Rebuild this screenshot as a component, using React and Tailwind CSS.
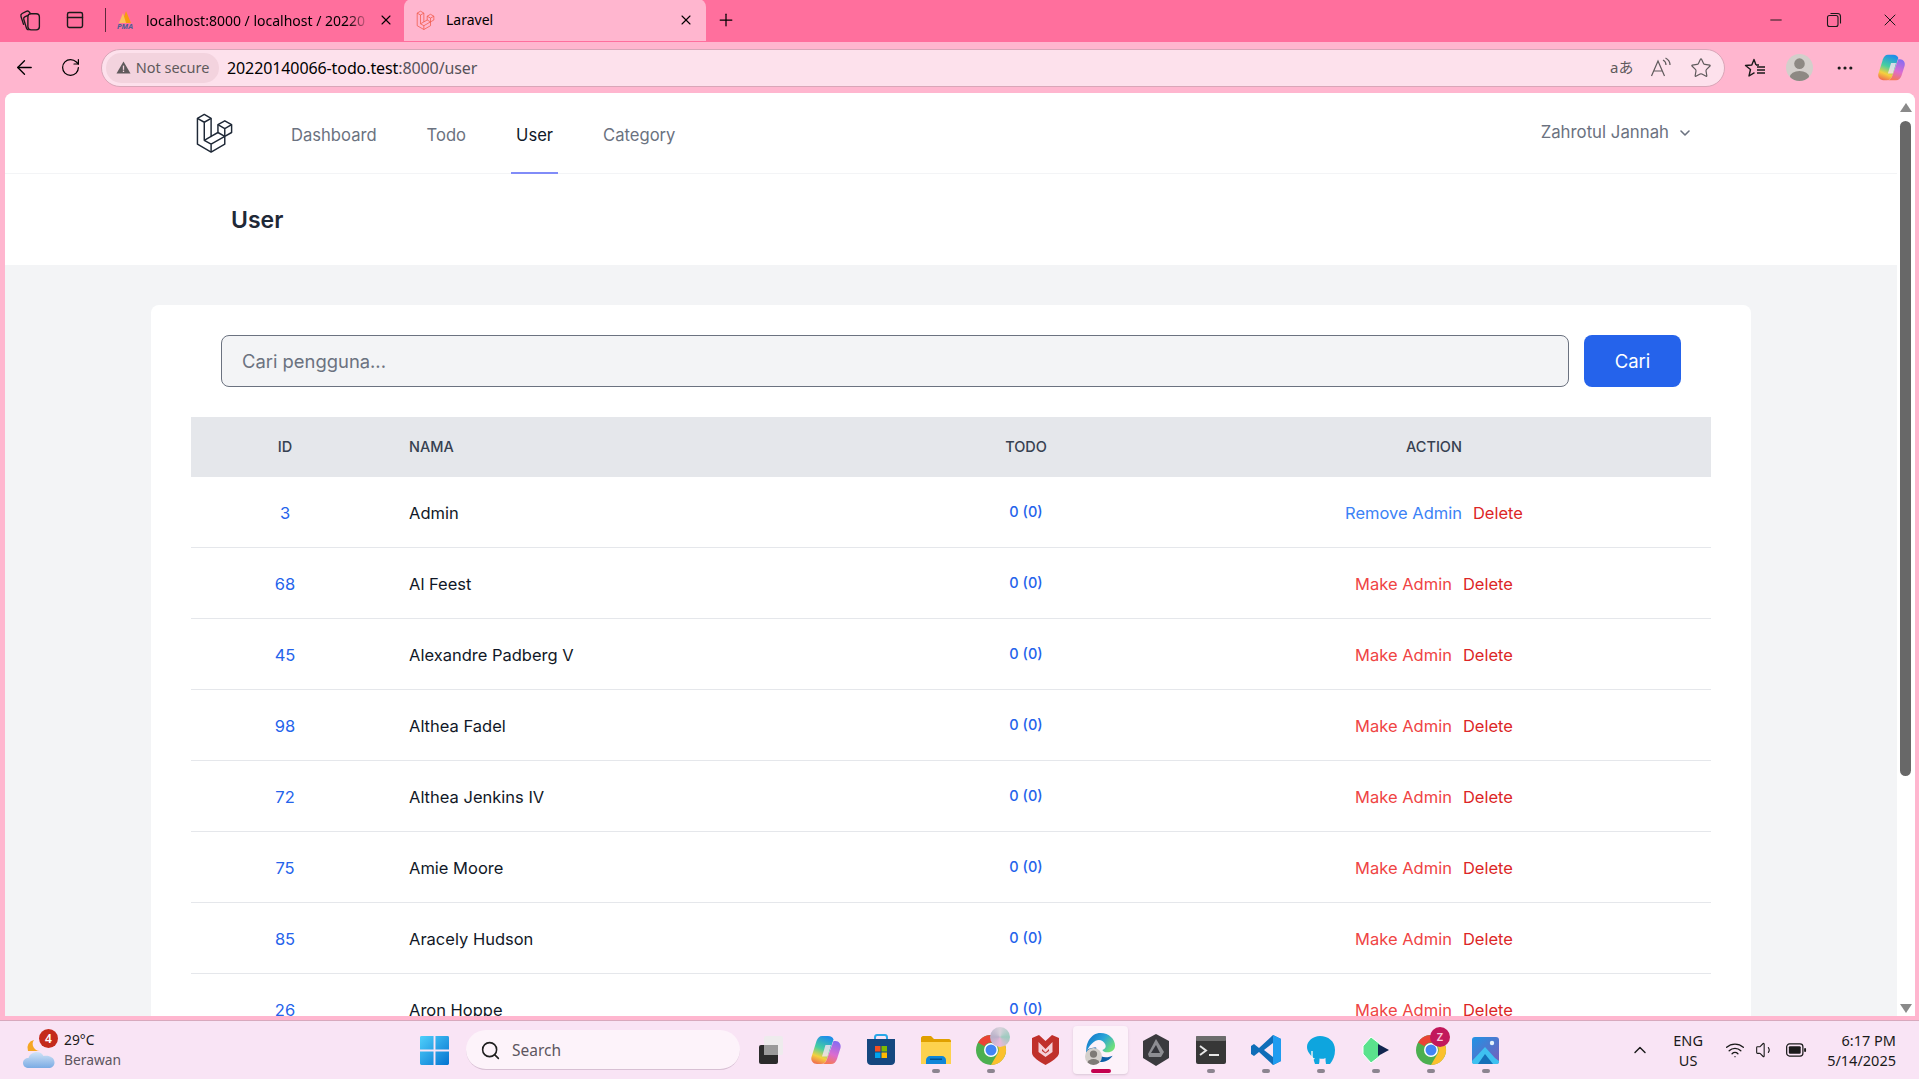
import { ChevronDown, ChevronUp, Minus, Plus, RotateCw, ArrowLeft, X, Search, Star, Wifi, Volume1, MoreHorizontal, PanelTop } from 'lucide-react';

const users = [
  { id: 3, name: 'Admin', admin: true },
  { id: 68, name: 'Al Feest' },
  { id: 45, name: 'Alexandre Padberg V' },
  { id: 98, name: 'Althea Fadel' },
  { id: 72, name: 'Althea Jenkins IV' },
  { id: 75, name: 'Amie Moore' },
  { id: 85, name: 'Aracely Hudson' },
  { id: 26, name: 'Aron Hoppe' },
];

const LaravelLogo = ({ className, color = '#1f2937' }) => (
  <svg viewBox="0 0 40 42" fill="none" stroke={color} strokeWidth="1.5" strokeLinejoin="round" className={className}>
    <path d="M1.5 6.5 8.5 2.5 15.5 6.5 V25 L22.5 21 V13 L29.5 9 36.5 13 V21 L29.5 25 V33 L15.5 41 1.5 33 Z" />
    <path d="M1.5 6.5 8.5 10.5 15.5 6.5 M8.5 10.5 V29 L15.5 33 V41 M8.5 29 15.5 25 M15.5 33 29.5 25 M22.5 13 29.5 17 36.5 13 M29.5 17 V25 M22.5 21 29.5 25" />
  </svg>
);

const CopilotIcon = ({ size = 32, id }) => (
  <svg viewBox="0 0 32 32" width={size} height={size}>
    <defs>
      <linearGradient id={`${id}a`} x1="0.6" y1="0" x2="0.3" y2="1">
        <stop offset="0" stopColor="#1f8fe8" />
        <stop offset="0.45" stopColor="#47cfa0" />
        <stop offset="0.75" stopColor="#f5d13e" />
        <stop offset="1" stopColor="#f0734e" />
      </linearGradient>
      <linearGradient id={`${id}b`} x1="0.6" y1="0" x2="0.3" y2="1">
        <stop offset="0" stopColor="#8a6cf0" />
        <stop offset="0.55" stopColor="#dc6cd0" />
        <stop offset="1" stopColor="#f7794f" />
      </linearGradient>
    </defs>
    <path d="M12 2h6c3 0 5 1.500 5.500 3.500L17 25c-1 3-3 5-6 5H7c-4 0-6.500-3.500-5.500-7l5-16C7.500 4 9.500 2 12 2z" fill={`url(#${id}a)`} />
    <path d="M12 30h9c3 0 5-2 6-5l3.500-11c1-3.500-1.500-7-5-7h-2L17 25c-1 3-3 5-5 5z" fill={`url(#${id}b)`} />
    <path d="M15.500 11h5.500l-3.500 11.500h-5.500z" fill="#fbe3f1" opacity="0.8" />
  </svg>
);

const ChromeIcon = () => (
  <svg viewBox="0 0 32 32" width="32" height="32">
    <circle cx="16" cy="16" r="15" fill="#4caf50" />
    <path d="M16 1a15 15 0 0 1 13 7.500H16a7.500 7.500 0 0 0-6.500 3.750L3 8.500A15 15 0 0 1 16 1z" fill="#ea4335" />
    <path d="M29 8.500A15 15 0 0 1 16 31l6.500-11.250A7.500 7.500 0 0 0 22.500 12z" fill="#fbc02d" />
    <circle cx="16" cy="16" r="7" fill="#fff" />
    <circle cx="16" cy="16" r="5.500" fill="#4285f4" />
  </svg>
);

const TaskIcon = ({ children, running, active }) => (
  <div className={`relative flex h-[48px] w-[55px] items-center justify-center rounded ${active ? 'bg-[#fdf2fa] shadow-sm' : ''}`}>
    {children}
    {running && <span className="absolute bottom-[1px] left-1/2 h-[4px] w-[8px] -translate-x-1/2 rounded-full bg-[#8c8490]" />}
    {active && <span className="absolute bottom-[1px] left-1/2 h-[4px] w-[20px] -translate-x-1/2 rounded-full bg-[#c4004f]" />}
  </div>
);

const App = () => {
  return (
    <div className="flex h-[1079px] w-[1919px] flex-col overflow-hidden bg-[#ffb6cf] font-['Noto_Sans',sans-serif] text-black">
      {/* tab strip */}
      <div className="flex h-[42px] shrink-0 items-center bg-[#ff6f9d] pb-[2px] pl-[19px]">
        <svg viewBox="0 0 22 22" width="23" height="23" fill="none" stroke="#1a1a1a" strokeWidth="1.3" className="mr-[23px]">
          <rect x="8.500" y="4.500" width="11" height="15.500" rx="3" />
          <path d="M8.500 6 5.500 7.500C4.500 8 4.300 9 4.600 10l2.600 8.500c.3 1 1 1.500 2 1.500" />
          <path d="M11 4.500 9.500 2.500C8.800 1.800 8 1.700 7 2.200L3 4.300C1.800 5 1.500 6 1.900 7.200l2.600 8" />
        </svg>
        <PanelTop size={20} strokeWidth={1.7} className="mr-[20px] text-[#1a1a1a]" />
        <div className="mr-[10px] h-[24px] w-px bg-[#5c2a3c]" />
        <div className="flex h-[42px] w-[288px] items-center gap-[8px]">
          <svg viewBox="0 0 22 20" width="22" height="20" className="shrink-0">
            <path d="M10 1 15 13H6z" fill="#f89c0e" />
            <path d="M7 3 10 13H3z" fill="#fbc15e" />
            <text x="1" y="19" fontSize="7.500" fontWeight="700" fontStyle="italic" fill="#4b5f94">PMA</text>
          </svg>
          <span className="w-[224px] overflow-hidden whitespace-nowrap text-[14px] [mask-image:linear-gradient(to_right,black_90%,transparent)]">localhost:8000 / localhost / 20220</span>
          <X size={16} strokeWidth={1.6} className="shrink-0" />
        </div>
        <div className="flex h-[42px] w-[302px] items-center rounded-t-lg bg-[#ffb6cf] pb-[1px] pl-[12px] pr-[12px]">
          <LaravelLogo color="#f0533f" className="h-[20px] w-[20px] shrink-0" />
          <span className="ml-[10px] flex-1 text-[14px]">Laravel</span>
          <X size={16} strokeWidth={1.6} />
        </div>
        <Plus size={20} strokeWidth={1.5} className="ml-[10px]" />
        <div className="ml-auto flex items-center text-[#1a1a1a]">
          <div className="flex w-[58px] justify-center"><Minus size={18} strokeWidth={1.3} /></div>
          <div className="flex w-[58px] justify-center">
            <svg viewBox="0 0 16 16" width="16" height="16" fill="none" stroke="#1a1a1a" strokeWidth="1.100">
              <rect x="1.500" y="3.500" width="10.500" height="11" rx="2" />
              <path d="M4.500 1.500h7c2 0 3 1 3 3v7" />
            </svg>
          </div>
          <div className="flex w-[56px] justify-center pr-[2px]"><X size={20} strokeWidth={1.2} /></div>
        </div>
      </div>

      {/* toolbar */}
      <div className="flex h-[51px] shrink-0 items-center pl-[13px] pr-[10px]">
        <ArrowLeft size={23} strokeWidth={1.4} />
        <RotateCw size={21} strokeWidth={1.4} className="ml-[24px]" />
        <div className="ml-[20px] flex h-[38px] w-[1624px] items-center rounded-full border border-[#d9a6b8] bg-[#fde1ec] pl-[4px] pr-[12px]">
          <div className="flex h-[30px] w-[113px] items-center justify-center gap-[5px] rounded-full bg-[#f3d3de] text-[14.500px] text-[#5f5a5c]">
            <svg viewBox="0 0 16 16" width="15" height="15"><path d="M8 1.500 15.500 14.500H.5Z" fill="#5f5a5c" /><rect x="7.300" y="6" width="1.400" height="4.500" fill="#f3d3de" /><rect x="7.300" y="11.300" width="1.400" height="1.500" fill="#f3d3de" /></svg>
            Not secure
          </div>
          <div className="ml-[8px] text-[16px] tracking-[-0.1px]">20220140066-todo.test<span className="text-[#56525a]">:8000/user</span></div>
          <div className="ml-auto flex items-center gap-[18px] text-[#5f5a5c]">
            <span className="w-[22px] whitespace-nowrap font-['Noto_Sans','Noto_Sans_CJK_JP',sans-serif] text-[15px]">aあ</span>
            <svg viewBox="0 0 22 22" width="22" height="22" fill="none" stroke="#5f5a5c" strokeWidth="1.200"><path d="M1.500 19 8 4l6.500 15M4 14h8" /><path d="M13 3c2 1 3 3 3 5M15.500 1c3 1.500 4.500 4 4.500 7" /></svg>
            <Star size={22} strokeWidth={1.3} />
          </div>
        </div>
        <div className="ml-[19px] flex items-center">
          <svg viewBox="0 0 22 22" width="22" height="22" fill="none" stroke="#1a1a1a" strokeWidth="1.400" strokeLinejoin="round"><path d="M12 8 10 2.500 7.800 8 1.500 8.500l5 4-1.500 6.500 5.500-3.300" /><path d="M12 8h3M13 13h8M13 10h8M13 16h8" /></svg>
          <div className="ml-[20px] flex h-[27px] w-[27px] items-end justify-center overflow-hidden rounded-full bg-[#d3cfcb]">
            <svg viewBox="0 0 28 28" width="27" height="27" fill="#8d8983"><circle cx="14" cy="10" r="5.500" /><ellipse cx="14" cy="24" rx="10" ry="6.500" /></svg>
          </div>
          <MoreHorizontal size={20} strokeWidth={1.8} className="ml-[22px] text-[#1a1a1a]" />
          <div className="ml-[22px]"><CopilotIcon id="cpa" size={29} /></div>
        </div>
      </div>

      {/* web page viewport */}
      <div className="ml-[5px] mr-[4px] flex h-[923px] shrink-0 overflow-hidden rounded-t-lg bg-[#f3f4f6]">
        <div className="min-w-0 flex-1 font-['Inter',sans-serif]">
          <nav className="h-[81px] border-b border-[#f3f4f6] bg-white">
            <div className="mx-auto flex h-full w-[1600px] items-stretch px-[40px]">
              <div className="flex items-center pl-[3px]">
                <LaravelLogo className="h-[43px] w-[43px] pb-[2px]" />
              </div>
              <div className="ml-[54px] flex gap-[50px] text-[16.600px] text-[#6b7280]">
                <a className="flex items-center pt-[5px]">Dashboard</a>
                <a className="flex items-center pt-[5px]">Todo</a>
                <a className="relative -mx-[5px] flex items-center px-[5px] pt-[5px] text-[#111827]">
                  User
                  <span className="absolute bottom-[-1px] left-0 right-0 h-[2px] bg-[#818cf8]" />
                </a>
                <a className="flex items-center pt-[5px]">Category</a>
              </div>
              <div className="ml-auto flex items-center gap-[8px] pr-[18px] text-[16.800px] text-[#6b7280]">
                Zahrotul Jannah
                <ChevronDown size={16} strokeWidth={2.4} />
              </div>
            </div>
          </nav>

          <header className="flex h-[91px] items-center bg-white">
            <div className="mx-auto w-[1600px] px-[80px] pt-[2px]">
              <h1 className="text-[23px] font-semibold text-[#1f2937]">User</h1>
            </div>
          </header>

          <main className="mx-auto mt-[40px] w-[1600px] rounded-t-lg bg-white px-[40px] pt-[30px]">
            <form className="flex gap-[15px] px-[30px]">
              <input
                placeholder="Cari pengguna..."
                className="h-[52px] w-[1348px] rounded-lg border border-[#6b7280] bg-[#f3f4f6] px-[20px] text-[18.400px] placeholder:text-[#6b7280]"
              />
              <button type="button" className="h-[52px] w-[97px] rounded-lg bg-[#2563eb] pt-[1px] text-[18.500px] text-white">Cari</button>
            </form>

            <table className="mt-[30px] w-[1520px] table-fixed border-separate border-spacing-0 text-left">
              <thead className="bg-[#e5e7eb] text-[14.500px] font-medium text-[#374151]">
                <tr className="h-[60px]">
                  <th className="w-[188px] px-[30px] text-center font-medium">ID</th>
                  <th className="w-[516px] px-[30px] font-medium">NAMA</th>
                  <th className="w-[262px] px-[30px] text-center font-medium">TODO</th>
                  <th className="w-[554px] px-[30px] text-center font-medium">ACTION</th>
                </tr>
              </thead>
              <tbody className="text-[16.500px]">
                {users.map((user) => (
                  <tr key={user.id} className="h-[71px]">
                    <td className="border-b border-[#e5e7eb] px-[30px] pt-[2px] text-center text-[#2563eb]">{user.id}</td>
                    <td className="border-b border-[#e5e7eb] px-[30px] pt-[2px] text-[#111827]">{user.name}</td>
                    <td className="border-b border-[#e5e7eb] px-[30px] pb-[1px] text-center text-[14.500px] font-medium text-[#2563eb]">0 (0)</td>
                    <td className="border-b border-[#e5e7eb] px-[30px] pt-[2px] text-center">
                      <span className={user.admin ? 'text-[#3b82f6]' : 'text-[#ef4444]'}>
                        {user.admin ? 'Remove Admin' : 'Make Admin'}
                      </span>
                      <span className="ml-[11px] text-[#dc2626]">Delete</span>
                    </td>
                  </tr>
                ))}
              </tbody>
            </table>
          </main>
        </div>

        {/* scrollbar */}
        <div className="flex w-[18px] shrink-0 flex-col items-center bg-white pr-[1px] pt-[10px]">
          <svg viewBox="0 0 12 9" width="12" height="9"><path d="M6 0 12 9H0Z" fill="#8a8a8a" /></svg>
          <div className="mt-[9px] h-[655px] w-[11px] rounded-full bg-[#686868]" />
          <svg viewBox="0 0 12 9" width="12" height="9" className="mt-auto mb-[3px]"><path d="M0 0H12L6 9Z" fill="#8a8a8a" /></svg>
        </div>
      </div>

      <div className="h-[4px] shrink-0" />

      {/* taskbar */}
      <div className="relative flex h-[59px] shrink-0 items-center border-t border-[#d8a9bd] bg-[#f9e4f5] pl-[23px] pr-[23px]">
        <div className="flex w-[444px] items-center">
          <div className="relative h-[40px] w-[33px]">
            <svg viewBox="0 0 32 30" width="32" height="30" className="absolute left-0 top-[9px]">
              <defs>
                <linearGradient id="cloud" x1="0" y1="0" x2="0" y2="1"><stop offset="0" stopColor="#d2e4f6" /><stop offset="1" stopColor="#7aabe4" /></linearGradient>
              </defs>
              <path d="M5 12a8 8 0 0 1 6-11 7 7 0 0 0 6 11z" fill="#f5a623" />
              <path d="M6 29c-3.500 0-6-2-6-5s2.500-5 5.500-5c1-3.500 4.500-6 8.500-6 3 0 5 1.500 6.500 4 5-1 11 1 11 6.500 0 3.500-2.500 5.500-6 5.500z" fill="url(#cloud)" />
            </svg>
            <span className="absolute left-[16px] top-[-1px] flex h-[19px] w-[19px] items-center justify-center rounded-full bg-[#c42b1c] text-[12px] font-semibold text-white">4</span>
          </div>
          <div className="ml-[8px] text-[13.800px] leading-[20px]">
            <div className="text-[#1a1a1a]">29°C</div>
            <div className="text-[#5d5660]">Berawan</div>
          </div>
        </div>

        <div className="absolute left-[408px] flex items-center">
          <div className="flex w-[58px] justify-center pr-[6px]">
            <svg viewBox="0 0 30 30" width="29" height="29">
              <defs>
                <linearGradient id="win" x1="0" y1="0" x2="1" y2="1"><stop offset="0" stopColor="#4fd0fb" /><stop offset="1" stopColor="#0473d0" /></linearGradient>
              </defs>
              <path d="M0 1.500A1.500 1.500 0 0 1 1.500 0H14v14H0ZM16 0h12.500A1.500 1.500 0 0 1 30 1.500V14H16ZM0 16h14v14H1.500A1.500 1.500 0 0 1 0 28.500ZM16 16h14v12.500a1.500 1.500 0 0 1-1.500 1.500H16Z" fill="url(#win)" />
            </svg>
          </div>
          <div className="flex h-[40px] w-[274px] items-center rounded-full border-b border-[#d8c0d4] bg-[#fdf3fa] pl-[14px] pt-[1px]">
            <Search size={21} strokeWidth={1.8} className="text-[#1f1f1f]" />
            <span className="ml-[11px] pt-[1px] text-[15.500px] text-[#5d5660]">Search</span>
          </div>
          <div className="ml-[3px] flex w-[55px] justify-center">
            <svg viewBox="0 0 24 28" width="24" height="28"><rect x="0" y="9" width="19" height="19" rx="2" fill="#2b2b2b" /><rect x="5" y="0" width="19" height="19" rx="2" fill="#ececec" opacity="0.9" /><rect x="5" y="9" width="14" height="10" fill="#9a9a9a" /></svg>
          </div>
          <TaskIcon><CopilotIcon id="cpb" size={32} /></TaskIcon>
          <TaskIcon>
            <svg viewBox="0 0 30 32" width="30" height="32">
              <path d="M9 7V3.500C9 2 10 1 11 1h8c1 0 2 1 2 2.500V7" fill="none" stroke="#2aa7e8" strokeWidth="2" />
              <path d="M1 5h28v22c0 2.500-2 4-4 4H5c-2 0-4-1.500-4-4Z" fill="#15477f" />
              <rect x="9" y="12" width="5.500" height="5.500" fill="#f25022" /><rect x="15.500" y="12" width="5.500" height="5.500" fill="#7fba00" />
              <rect x="9" y="18.500" width="5.500" height="5.500" fill="#00a4ef" /><rect x="15.500" y="18.500" width="5.500" height="5.500" fill="#ffb900" />
            </svg>
          </TaskIcon>
          <TaskIcon running>
            <svg viewBox="0 0 30 28" width="30" height="28">
              <path d="M0 2c0-1 1-2 2-2h8l3 3h15c1 0 2 1 2 2v4H0Z" fill="#e0a000" />
              <path d="M0 6h30v22H0Z" fill="#fdd24e" />
              <path d="M5 28v-4c0-2 2-4 4-4h12c2 0 4 2 4 4v4Z" fill="#0f86d8" />
              <rect x="9" y="22.500" width="12" height="1.500" fill="#05528f" />
            </svg>
          </TaskIcon>
          <TaskIcon running>
            <ChromeIcon />
            <span className="absolute left-[27px] top-[1px] h-[20px] w-[20px] rounded-full bg-[conic-gradient(#d9d2dc,#9dcbbf,#e8b9d8,#b9b0c8,#d9d2dc)]" />
          </TaskIcon>
          <TaskIcon>
            <svg viewBox="0 0 27 30" width="27" height="30">
              <path d="M0 3 7 0l6.500 6L20 0l7 3v15c0 4-8 9-13.500 12C8 27 0 22 0 18Z" fill="#c0302b" />
              <path d="M6.500 7v10l7 5 7-5V7l-7 7Z" fill="#f4d0d8" />
              <path d="M10 14v2l3.500 2.500L17 16v-2l-3.500 3.500Z" fill="#c0302b" />
            </svg>
          </TaskIcon>
          <TaskIcon active>
            <svg viewBox="0 0 32 32" width="31" height="31" className="mb-[5px]">
              <defs>
                <linearGradient id="edge" x1="0" y1="0" x2="1" y2="0.6"><stop offset="0" stopColor="#0c6cc6" /><stop offset="0.55" stopColor="#2aa4d8" /><stop offset="1" stopColor="#6fe07a" /></linearGradient>
              </defs>
              <path d="M16 1c9 0 15 6.500 15 13 0 4.500-3.500 7-7.500 7-3 0-5-1-5.500-2.500 3-1 4-3 3-5.500C19.500 9 15 7 11 9 5.500 12 2 18 1.500 22 0 12 6 1 16 1z" fill="url(#edge)" />
              <path d="M1.500 20c1 6 7 11 14 11 5.500 0 10-2 13-6.500-3 1.500-8 2.500-12 .5-3.500-2-5-5.500-5-9-4 0-8.500 1-10 4z" fill="#0b5fa8" />
            </svg>
            <span className="absolute bottom-[9px] left-[12px] flex h-[17px] w-[17px] items-end justify-center overflow-hidden rounded-full bg-[#d3cfcb]">
              <svg viewBox="0 0 28 28" width="17" height="17" fill="#7e7a76"><circle cx="14" cy="10" r="6" /><ellipse cx="14" cy="25" rx="10" ry="7" /></svg>
            </span>
          </TaskIcon>
          <TaskIcon>
            <svg viewBox="0 0 28 32" width="28" height="32">
              <path d="M14 0 27 7v17l-13 8-13-8V7Z" fill="#3a3a3e" />
              <path d="M14 5 22 18l-3 5H7l-1-3Z" fill="#8d8d92" />
              <path d="M14 11 18 19H9Z" fill="#34343a" />
            </svg>
          </TaskIcon>
          <TaskIcon running>
            <svg viewBox="0 0 30 28" width="30" height="28">
              <rect width="30" height="28" rx="2" fill="#373737" />
              <rect width="30" height="5" rx="1" fill="#6c6c6c" />
              <path d="M4 10l6 4.500-6 4.500" fill="none" stroke="#e6e6e6" strokeWidth="2" />
              <rect x="13" y="18" width="10" height="2" fill="#e6e6e6" />
            </svg>
          </TaskIcon>
          <TaskIcon running>
            <svg viewBox="0 0 30 30" width="30" height="30">
              <path d="M22 0 30 4v22l-8 4L8 17l-5 4-3-2v-8l3-2 5 4Z" fill="#0f6db8" />
              <path d="M22 0 30 4v22l-8 4Z" fill="#1f9cf0" />
              <path d="M22 8v14l-9-7Z" fill="#f9e4f5" />
            </svg>
          </TaskIcon>
          <TaskIcon running>
            <svg viewBox="0 0 28 30" width="28" height="30">
              <path d="M13 1c8 0 15 5 15 14 0 6-2 10-5 14h-4c-.5-2-.5-4-.5-6-2 1-4 1-6 .5 0 2 0 4-.5 5.500H8C7 26 6 22 6 22 3 20 0 16 0 12 0 6 6 1 13 1z" fill="#0ea5de" />
              <path d="M5 16v7c0 1.500 2 1.500 2 0" fill="none" stroke="#f4f4f4" strokeWidth="1.400" />
            </svg>
          </TaskIcon>
          <TaskIcon running>
            <svg viewBox="0 0 28 26" width="28" height="26">
              <path d="M9 0 18 7v12l-9 7-8-9V9Z" fill="#5be28d" stroke="#fff" strokeWidth="1" />
              <path d="M16 7 27 13 16 19Z" fill="#12264f" />
            </svg>
          </TaskIcon>
          <TaskIcon running>
            <ChromeIcon />
            <span className="absolute left-[27px] top-[1px] flex h-[20px] w-[20px] items-center justify-center rounded-full bg-[#c2185b] text-[11px] font-semibold text-[#f8c6da]">Z</span>
          </TaskIcon>
          <TaskIcon running>
            <svg viewBox="0 0 27 27" width="27" height="27">
              <defs>
                <linearGradient id="photos" x1="0" y1="0" x2="1" y2="1"><stop offset="0" stopColor="#1f94e6" /><stop offset="1" stopColor="#7b5cb8" /></linearGradient>
              </defs>
              <rect width="27" height="27" rx="3" fill="url(#photos)" />
              <circle cx="20" cy="6" r="2.200" fill="#e5f2fb" />
              <path d="M0 24 13 10l10 11 4 3v1a2 2 0 0 1-2 2H2a2 2 0 0 1-2-2Z" fill="#3ec1f0" />
              <path d="M6 27 13 17l8 10Z" fill="#1470b8" />
            </svg>
          </TaskIcon>
        </div>

        <div className="ml-auto flex items-center">
          <ChevronUp size={20} strokeWidth={1.7} className="text-[#1a1a1a]" />
          <div className="ml-[18px] w-[40px] text-center text-[14.500px] leading-[20px] text-[#1a1a1a]">ENG<br />US</div>
          <Wifi size={20} strokeWidth={1.6} className="ml-[17px] text-[#1a1a1a]" />
          <Volume1 size={20} strokeWidth={1.3} className="ml-[10px] text-[#1a1a1a]" />
          <svg viewBox="0 0 22 14" width="21" height="14" className="ml-[11px]">
            <rect x="0.700" y="0.700" width="17" height="12.600" rx="3" fill="none" stroke="#1a1a1a" strokeWidth="1.300" />
            <rect x="3" y="3" width="12.400" height="8" rx="1.200" fill="#1a1a1a" />
            <rect x="19" y="5" width="2" height="4" rx="1" fill="#1a1a1a" />
          </svg>
          <div className="ml-[20px] text-right text-[14.500px] leading-[20px] text-[#1a1a1a]">6:17 PM<br />5/14/2025</div>
        </div>
      </div>
    </div>
  );
};

export default App;
